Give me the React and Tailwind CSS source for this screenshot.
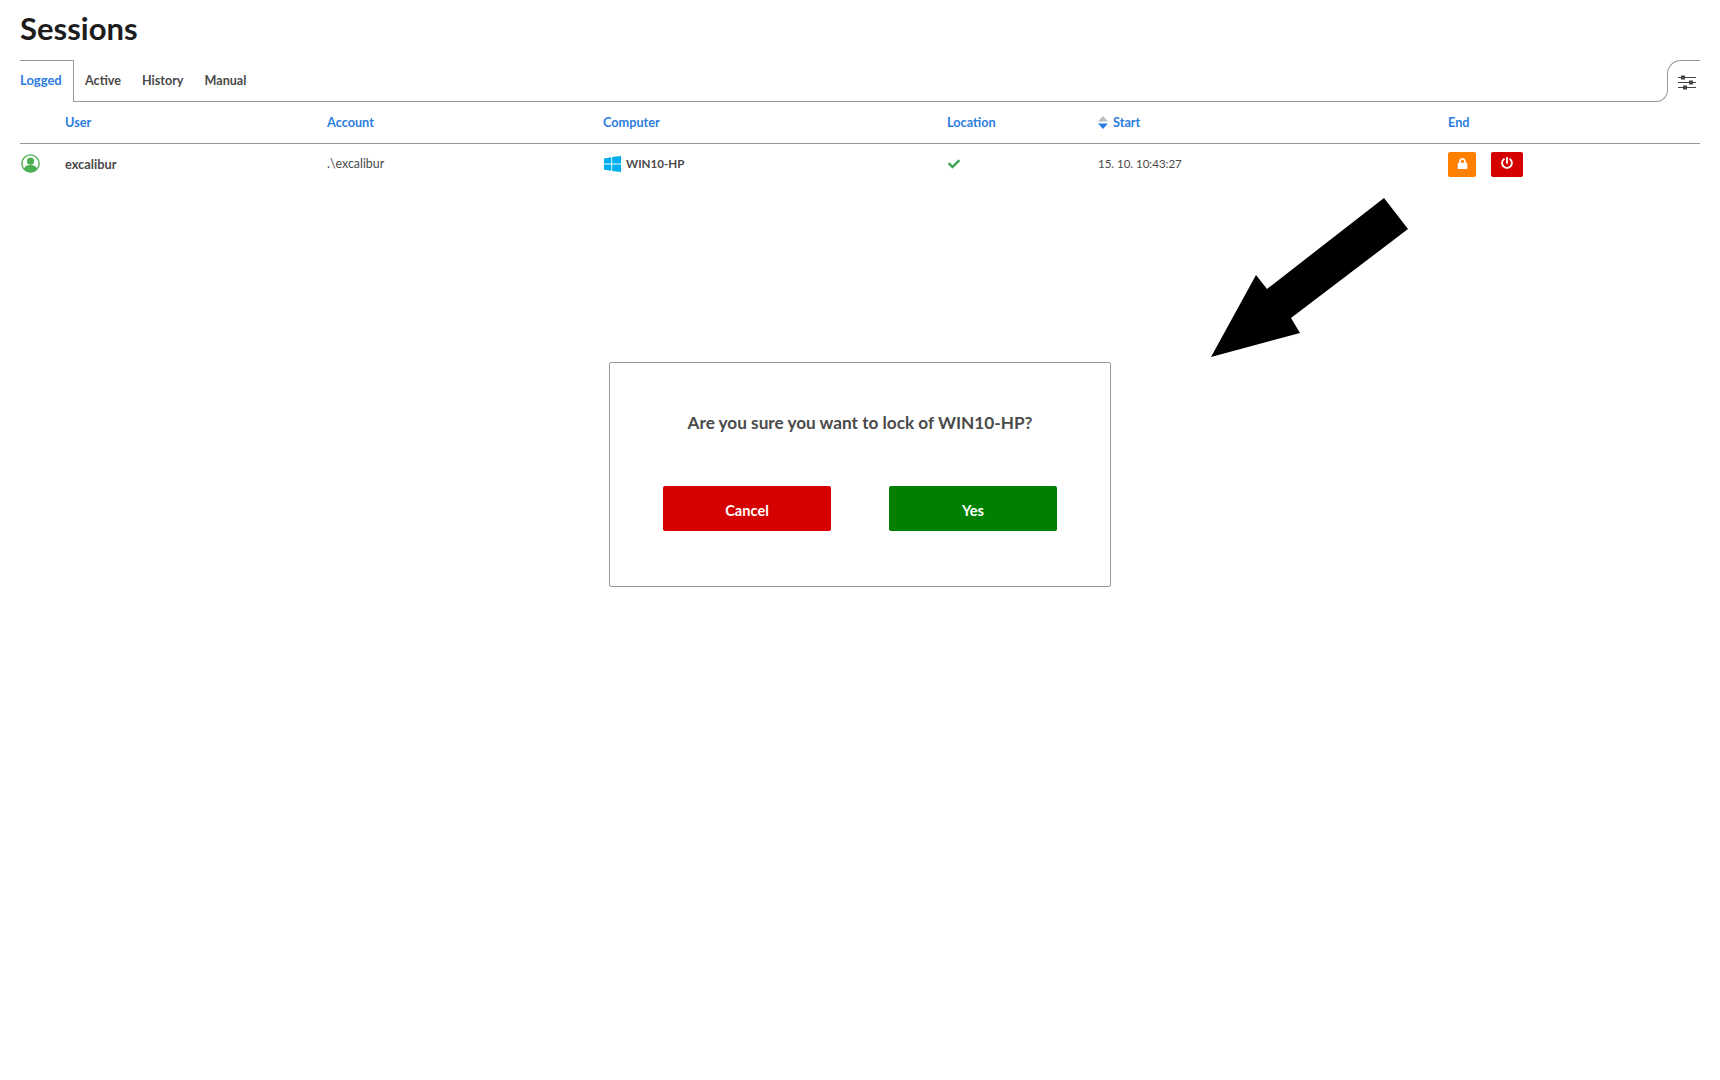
import { FaLock, FaPowerOff, FaCheck } from "react-icons/fa";

const cols = "grid grid-cols-[45px_262px_276px_344px_151px_350px_1fr] items-center";

function WindowsIcon() {
  return (
    <svg width="17" height="16" viewBox="0 0 17 16" fill="#00adef">
      <polygon points="0,2.4 7.3,1.2 7.3,7.6 0,7.6" />
      <polygon points="8.2,1.1 17,0 17,7.6 8.2,7.6" />
      <polygon points="0,8.4 7.3,8.4 7.3,14.8 0,13.7" />
      <polygon points="8.2,8.4 17,8.4 17,16 8.2,14.9" />
    </svg>
  );
}

function UserIcon() {
  return (
    <svg width="19" height="19" viewBox="0 0 19 19">
      <circle cx="9.5" cy="9.5" r="8.6" fill="#fff" stroke="#4caf50" strokeWidth="1.4" />
      <circle cx="9.5" cy="7.2" r="3.6" fill="#4caf50" />
      <path d="M2.8 15 C4 11.8 6.5 11 9.5 11 C12.5 11 15 11.8 16.2 15 C14.5 17.2 12 18.2 9.5 18.2 C7 18.2 4.5 17.2 2.8 15 Z" fill="#4caf50" />
    </svg>
  );
}

function SortIcon() {
  return (
    <svg width="10" height="13" viewBox="0 0 10 13">
      <polygon points="5,0 10,5.5 0,5.5" fill="#b8bcc4" />
      <polygon points="0,7.5 10,7.5 5,13" fill="#2b7de0" />
    </svg>
  );
}

function SlidersIcon() {
  return (
    <svg width="18" height="15" viewBox="0 0 18 15">
      <path d="M0 2.5H18M0 7.5H18M0 12.5H18" stroke="#444" strokeWidth="1" />
      <rect x="3" y="0.5" width="4" height="4" fill="#444" />
      <rect x="11" y="5.5" width="4" height="4" fill="#444" />
      <rect x="5" y="10.5" width="4" height="4" fill="#444" />
    </svg>
  );
}

export default function App() {
  return (
    <div className="relative min-h-[1080px] bg-white px-5 font-['Lato',sans-serif] text-[#4a4a4a]">
      <h1 className="h-[60px] pt-[8px] text-[31px] leading-[40px] font-bold text-[#1c1c1c]">Sessions</h1>

      {/* tabs */}
      <div className="flex h-[42px] text-[12.6px] font-bold">
        <div className="flex w-[54px] items-center border-t border-r border-[#999] pb-[1px] text-[13px] text-[#2b7de0]">Logged</div>
        <div className="flex flex-1 items-center gap-[21px] border-b border-[#999] pt-[1px] pl-[11px]">
          <span>Active</span>
          <span>History</span>
          <span>Manual</span>
        </div>
        <div className="h-[12px] w-[12px] self-end rounded-br-[12px] border-r border-b border-[#999]" />
        <div className="-ml-px h-[30px] w-[33px] rounded-tl-[14px] border-t border-l border-[#999] pt-[14px] pl-[10px]">
          <SlidersIcon />
        </div>
      </div>

      {/* table header */}
      <div className={`${cols} h-[42px] border-b border-[#999] pt-[1px] text-[12.7px] font-bold text-[#2b7de0]`}>
        <span />
        <span>User</span>
        <span>Account</span>
        <span>Computer</span>
        <span>Location</span>
        <span className="flex items-center gap-[5px]"><SortIcon />Start</span>
        <span>End</span>
      </div>

      {/* row */}
      <div className={`${cols} h-[41px] pb-[1px] text-[12.4px]`}>
        <span className="pl-px pb-[2px]"><UserIcon /></span>
        <span className="pt-[1px] text-[12.8px] font-bold">excalibur</span>
        <span>.\excalibur</span>
        <span className="flex items-center gap-[5px] pl-px text-[11.6px] font-bold"><WindowsIcon />WIN10-HP</span>
        <FaCheck className="ml-px text-[12px] text-[#3aa655]" />
        <span className="pb-[1px] text-[11.5px]">15. 10. 10:43:27</span>
        <span className="flex gap-[15px]">
          <button className="flex h-[25px] w-[28px] items-center justify-center rounded-[2px] bg-[#ff8000] pb-[2px] text-[11px] text-white"><FaLock /></button>
          <button className="flex h-[25px] w-[32px] items-center justify-center rounded-[2px] bg-[#d50000] pb-[2px] pr-px text-[12px] text-white"><FaPowerOff /></button>
        </span>
      </div>

      {/* annotation arrow */}
      <svg className="absolute top-[198px] left-[1211px]" width="197" height="159" viewBox="1211 198 197 159">
        <polygon points="1384,198 1408,229 1291,318 1300,333 1211,357 1256,275 1267,289" fill="#000" />
      </svg>

      {/* confirm dialog */}
      <div className="absolute top-[362px] left-[609px] flex h-[225px] w-[502px] flex-col items-center rounded-[2px] border border-[#999] bg-white px-[53px] pt-[48px]">
        <p className="text-[17.2px] leading-[24px] font-bold">Are you sure you want to lock of WIN10-HP?</p>
        <div className="mt-[51px] flex w-full justify-between">
          <button className="h-[45px] w-[168px] rounded-[2px] bg-[#d50000] pt-[4px] text-[14.6px] font-bold text-white">Cancel</button>
          <button className="h-[45px] w-[168px] rounded-[2px] bg-[#008000] pt-[4px] text-[14.6px] font-bold text-white">Yes</button>
        </div>
      </div>
    </div>
  );
}
